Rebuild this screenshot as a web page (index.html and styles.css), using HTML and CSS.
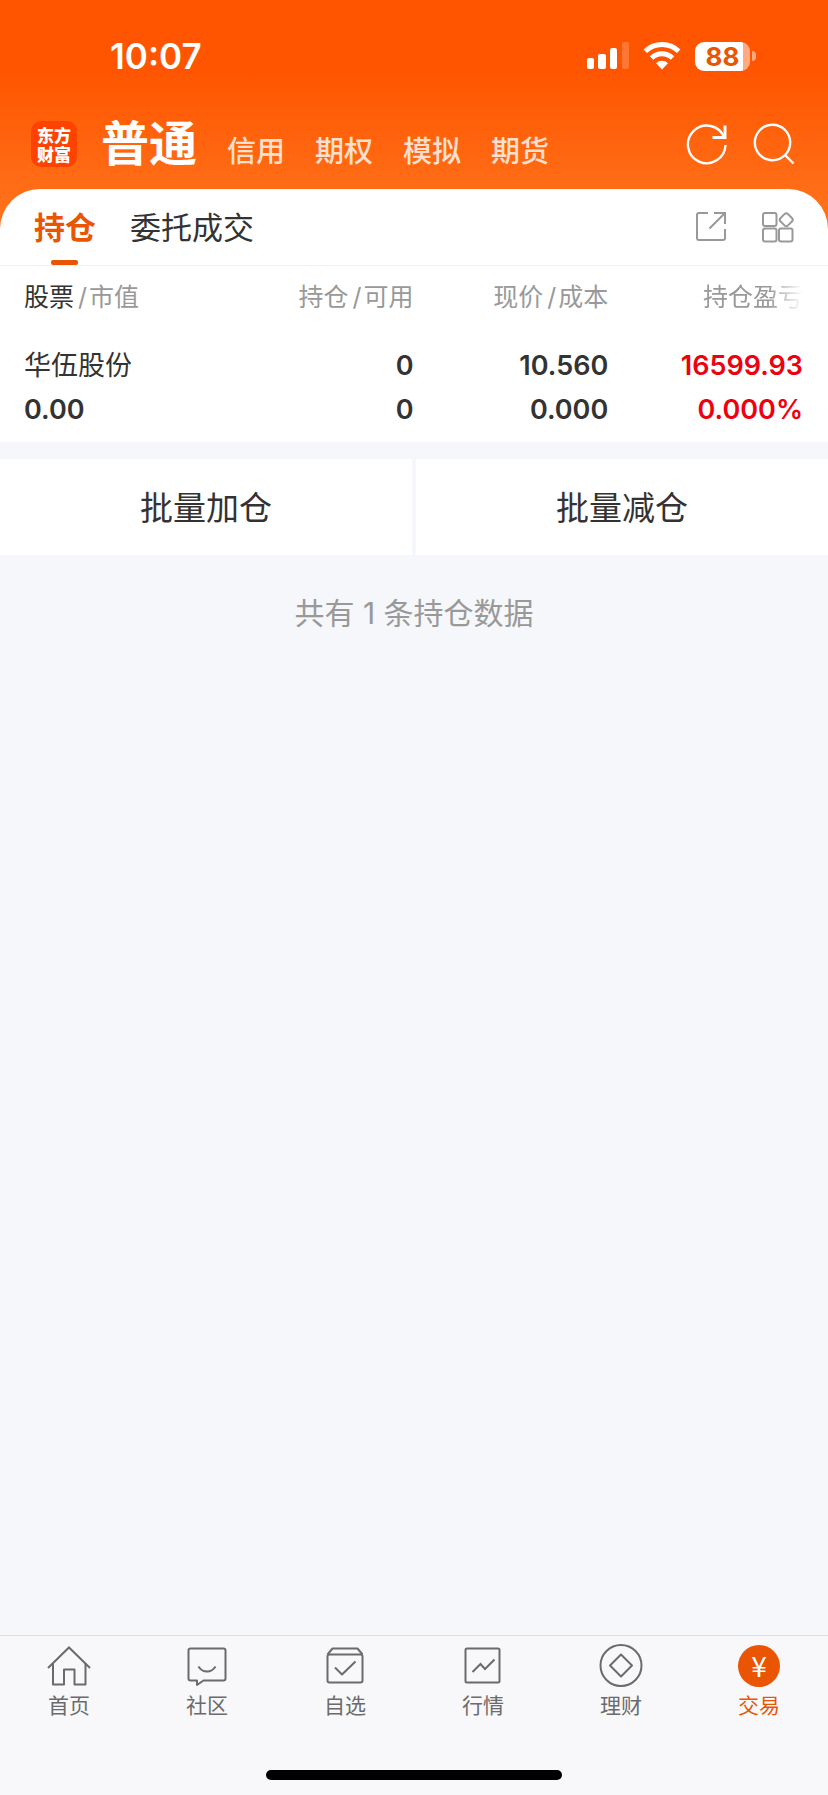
FILE: index.html
```html
<!DOCTYPE html>
<html lang="zh-CN">
<head>
  <meta charset="UTF-8" />
  <meta name="viewport" content="width=device-width, initial-scale=1.0" />
  <title>交易 - 持仓</title>
  <link rel="stylesheet" href="styles.css">
</head>
<body>

  <header class="header">
    <div class="status-bar">
      <span class="time">10:07</span>
      <div class="status-icons">
        <svg width="42" height="28" viewBox="0 0 42 28" fill="#fff" aria-hidden="true">
          <rect x="0" y="16" width="7" height="11" rx="2" />
          <rect x="11" y="12" width="8" height="15" rx="2" />
          <rect x="23" y="6" width="7" height="21" rx="2" />
          <rect x="35" y="0" width="7" height="27" rx="2" opacity="0.2" />
        </svg>
        <svg width="38" height="28" viewBox="0 0 38 28" fill="none" stroke="#fff" stroke-width="5" aria-hidden="true">
          <path d="M2.300 9.300A24 24 0 0 1 35.700 9.300" />
          <path d="M8.500 16A15 15 0 0 1 29.500 16" />
          <path d="M19 27.500L13 21.300A8.500 8.500 0 0 1 25 21.300Z" fill="#fff" stroke="none" />
        </svg>
        <div class="battery">
          <span class="battery-body">88</span>
          <span class="battery-cap"></span>
        </div>
      </div>
    </div>

    <div class="account-bar">
      <div class="logo">东方财富</div>
      <nav class="accounts" aria-label="账户类型">
        <a class="account active" href="#">普通</a>
        <a class="account" href="#">信用</a>
        <a class="account" href="#">期权</a>
        <a class="account" href="#">模拟</a>
        <a class="account" href="#">期货</a>
      </nav>
      <div class="header-actions">
        <button type="button" aria-label="刷新">
          <svg width="42" height="42" viewBox="0 0 42 42" fill="none" stroke="#fff" stroke-width="2.400">
            <path d="M39.500 22A18.800 18.800 0 1 1 38.200 14.500" />
            <path d="M39 2.500V14.500H26.500" stroke-width="3" />
          </svg>
        </button>
        <button type="button" aria-label="搜索">
          <svg width="42" height="42" viewBox="0 0 42 42" fill="none" stroke="#fff" stroke-width="2.400">
            <circle cx="19.500" cy="19.500" r="17.700" />
            <path d="M32 32L40.500 40.500" />
          </svg>
        </button>
      </div>
    </div>
  </header>

  <main class="main">
    <section class="card">
      <div class="tabs">
        <button class="tab active" type="button">持仓</button>
        <button class="tab" type="button">委托成交</button>
        <div class="tab-actions">
          <button type="button" aria-label="分享">
            <svg width="32" height="32" viewBox="0 0 32 32" fill="none" stroke="#999" stroke-width="2">
              <path d="M13 2H4Q2 2 2 4V27Q2 29 4 29H28Q30 29 30 27V18" />
              <path d="M19 2H30V13M30 2L14.500 17.500" />
            </svg>
          </button>
          <button type="button" aria-label="更多功能">
            <svg width="32" height="32" viewBox="0 0 32 32" fill="none" stroke="#999" stroke-width="2">
              <rect x="1" y="2" width="13.500" height="13" rx="2" />
              <rect x="1" y="17.500" width="13.500" height="13" rx="2" />
              <rect x="17" y="17.500" width="13.500" height="13" rx="2" />
              <rect x="19" y="3.500" width="10.500" height="10.500" rx="2.500" transform="rotate(45 24.250 8.750)" />
            </svg>
          </button>
        </div>
      </div>

      <table class="positions">
        <thead>
          <tr>
            <th><b>股票</b><i>/</i>市值</th>
            <th>持仓<i>/</i>可用</th>
            <th>现价<i>/</i>成本</th>
            <th><span class="fade">持仓盈亏</span></th>
          </tr>
        </thead>
        <tbody>
          <tr>
            <td class="name">华伍股份</td>
            <td>0</td>
            <td>10.560</td>
            <td class="up">16599.93</td>
          </tr>
          <tr>
            <td>0.00</td>
            <td>0</td>
            <td>0.000</td>
            <td class="up">0.000%</td>
          </tr>
        </tbody>
      </table>
    </section>

    <div class="batch">
      <button type="button">批量加仓</button>
      <button type="button">批量减仓</button>
    </div>

    <p class="summary">共有 1 条持仓数据</p>
  </main>

  <footer class="footer">
    <nav class="tabbar" aria-label="主导航">
      <a href="#">
        <svg width="44" height="44" viewBox="0 0 44 44" fill="none" stroke="#6b6b6b" stroke-width="2">
          <path d="M1 24L22 3.500L43 24" />
          <path d="M6 19.500V40.500H17V25.500H27.500V40.500H38.500V19.500" stroke-linejoin="round" />
        </svg>
        <span>首页</span>
      </a>
      <a href="#">
        <svg width="44" height="44" viewBox="0 0 44 44" fill="none" stroke="#6b6b6b" stroke-width="2">
          <path d="M5.500 4.500H38.500Q40.500 4.500 40.500 6.500V34.500Q40.500 36.500 38.500 36.500H18.500L12 41V36.500H5.500Q3.500 36.500 3.500 34.500V6.500Q3.500 4.500 5.500 4.500Z" stroke-linejoin="round" />
          <path d="M13.500 22.500Q16.500 27.500 22 27.500T30.500 22.500" />
        </svg>
        <span>社区</span>
      </a>
      <a href="#">
        <svg width="44" height="44" viewBox="0 0 44 44" fill="none" stroke="#6b6b6b" stroke-width="2" stroke-linejoin="round">
          <path d="M4.500 10.500L9.500 4.500H34.500L39.500 10.500" />
          <rect x="4.500" y="10.500" width="35" height="28" rx="2" />
          <path d="M12 23.500L19 30.500L32.500 17.500" />
        </svg>
        <span>自选</span>
      </a>
      <a href="#">
        <svg width="44" height="44" viewBox="0 0 44 44" fill="none" stroke="#6b6b6b" stroke-width="2">
          <rect x="4.500" y="4.500" width="34" height="34" rx="1.500" />
          <path d="M11.500 28L19.500 20L24 25L33.500 15.500" />
        </svg>
        <span>行情</span>
      </a>
      <a href="#">
        <svg width="44" height="44" viewBox="0 0 44 44" fill="none" stroke="#6b6b6b" stroke-width="2" stroke-linejoin="round">
          <circle cx="22" cy="21.500" r="20.500" />
          <path d="M22 10.500L33 21.500L22 32.500L11 21.500Z" />
        </svg>
        <span>理财</span>
      </a>
      <a class="active" href="#">
        <em class="coin">¥</em>
        <span>交易</span>
      </a>
    </nav>
    <div class="home-indicator"></div>
  </footer>

</body>
</html>
```

FILE: styles.css
```css
* {
  box-sizing: border-box;
}
body {
  display: flex;
  flex-direction: column;
  min-height: 100vh;
  margin: 0;
  background: #f6f7fa;
  color: #333;
  font-family: Inter, "Noto Sans CJK SC", sans-serif;
}
a {
  color: inherit;
  text-decoration: none;
}
button {
  padding: 0;
  border: none;
  background: none;
  color: inherit;
  font: inherit;
  cursor: pointer;
}
svg {
  display: block;
}

/* header, runs on behind the rounded corners of the card */
.header {
  padding-bottom: 62px;
  background: linear-gradient(#ff5500 30%, #ff7019 85%);
  color: #fff;
}
.status-bar {
  display: flex;
  align-items: center;
  justify-content: space-between;
  height: 112px;
  padding: 0 72px 0 110px;
}
.time {
  font-size: 35px;
  font-weight: 600;
}
.status-icons {
  display: flex;
  align-items: center;
  gap: 14px;
}
.battery {
  display: flex;
  align-items: center;
  gap: 2px;
}
.battery-body {
  width: 55px;
  border-radius: 9px;
  background: linear-gradient(90deg, #fff 88%, #ffaa80 88%);
  color: #ea5504;
  font-size: 26px;
  font-weight: 700;
  line-height: 29px;
  text-align: center;
}
.battery-cap {
  width: 4px;
  height: 10px;
  border-radius: 0 4px 4px 0;
  background: #ffaa80;
}
.account-bar {
  display: flex;
  align-items: center;
  height: 64px;
  padding: 0 33px 0 31px;
}
.logo {
  width: 46px;
  height: 46px;
  margin-right: 24px;
  padding: 4px 6px;
  border-radius: 10px;
  background: #ff4200;
  font-family: "Noto Sans CJK SC", sans-serif;
  font-size: 17px;
  font-weight: 900;
  line-height: 19px;
}
.accounts {
  display: flex;
  align-items: flex-end;
  gap: 30px;
}
.account {
  color: #ffe0cf;
  font-size: 29px;
  font-weight: 500;
  line-height: 52px;
}
.account.active {
  color: #fff;
  font-size: 48px;
  font-weight: 700;
  line-height: 68px;
}
.header-actions {
  display: flex;
  gap: 25px;
  margin-left: auto;
}

.main {
  flex: 1;
}
.card {
  margin-top: -49px;
  padding-bottom: 10px;
  border-radius: 40px 40px 0 0;
  background: #fff;
}
.tabs {
  display: flex;
  gap: 34px;
  height: 77px;
  padding: 0 34px;
  border-bottom: 1px solid #f0f0f2;
}
.tab {
  position: relative;
  padding-bottom: 4px;
  font-size: 31px;
}
.tab.active {
  color: #ea5504;
  font-weight: 700;
}
.tab.active::after {
  content: "";
  position: absolute;
  bottom: 0;
  left: 50%;
  width: 27px;
  height: 5px;
  margin-left: -14px;
  border-radius: 2px;
  background: #ea5504;
}
.tab-actions {
  display: flex;
  gap: 35px;
  margin-left: auto;
}

/* positions */
.positions {
  width: 100%;
  padding: 0 25px 0 24px;
  border-spacing: 0;
  table-layout: fixed;
}
.positions th,
.positions td {
  padding: 0;
  text-align: right;
}
.positions th {
  height: 62px;
  color: #999;
  font-size: 25px;
  font-weight: 400;
  line-height: 62px;
}
.positions td {
  height: 44px;
  font-size: 27px;
  font-weight: 600;
  line-height: 44px;
}
.positions tbody::before {
  content: "";
  display: block;
  height: 16px;
}
.positions th:first-child,
.positions td:first-child {
  text-align: left;
}
.positions b {
  color: #333;
  font-weight: 400;
}
.positions i {
  margin: 0 2px 0 4px;
  font-style: normal;
}
.positions .name {
  font-weight: 400;
}
.positions .up {
  color: #f0000f;
}
.fade {
  -webkit-mask-image: linear-gradient(90deg, #000 65%, transparent);
  mask-image: linear-gradient(90deg, #000 65%, transparent);
}

.batch {
  display: flex;
  gap: 4px;
  margin-top: 17px;
}
.batch button {
  flex: 1;
  height: 96px;
  padding-bottom: 2px;
  background: #fff;
  font-size: 33px;
}
.summary {
  margin: 36px 0;
  color: #999;
  font-size: 30px;
  line-height: 44px;
  text-align: center;
}

/* bottom bar */
.footer {
  padding-bottom: 15px;
  border-top: 1px solid #dcdfe1;
  background: #f8f8fb;
}
.tabbar {
  display: flex;
  height: 134px;
  padding-top: 8px;
}
.tabbar a {
  display: flex;
  flex: 1;
  flex-direction: column;
  align-items: center;
  gap: 4px;
  color: #6b6b6b;
  font-size: 21px;
  line-height: 28px;
}
.tabbar .active {
  color: #ea5504;
}
.coin {
  width: 42px;
  height: 42px;
  margin: 1px;
  border-radius: 50%;
  background: #ea5504;
  color: #fff;
  font-family: "Noto Sans CJK SC", sans-serif;
  font-size: 28px;
  font-style: normal;
  line-height: 40px;
  text-align: center;
}
.home-indicator {
  width: 296px;
  height: 10px;
  margin: 0 auto;
  border-radius: 5px;
  background: #000;
}
```
